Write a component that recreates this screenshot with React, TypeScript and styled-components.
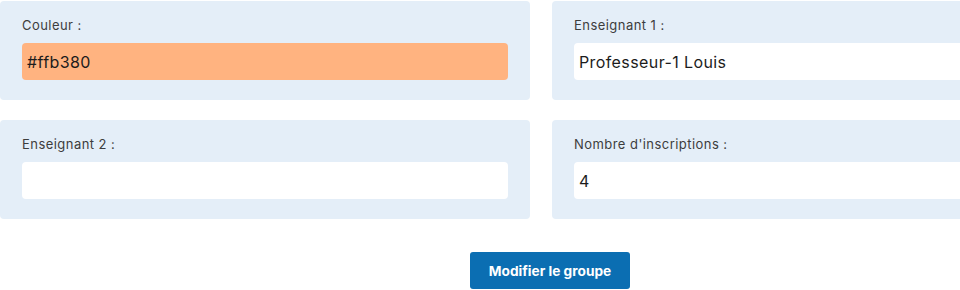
import React from 'react'
import styled, { createGlobalStyle } from 'styled-components'

const GlobalStyle = createGlobalStyle`
  html, body {
    margin: 0;
    padding: 0;
    background: #ffffff;
    font-family: Inter, "Noto Sans", "Liberation Sans", sans-serif;
    overflow: hidden;
  }
`

const Form = styled.form`
  width: 1100px;
  padding-top: 1px;
  display: flex;
  flex-direction: column;
`

const Grid = styled.div`
  display: grid;
  grid-template-columns: 530px 530px;
  column-gap: 22px;
  row-gap: 20px;
`

const Card = styled.div`
  background: #e4eef8;
  border-radius: 4px;
  padding: 16px 22px 20px;
  display: flex;
  flex-direction: column;
  gap: 9px;
`

const Label = styled.label`
  font-size: 13px;
  letter-spacing: 0.45px;
  line-height: 17px;
  color: #3d3d3d;
`

const Field = styled.div<{ $bg?: string }>`
  height: 37px;
  border-radius: 4px;
  background: ${p => p.$bg || '#ffffff'};
  display: flex;
  align-items: center;
  padding: 0 5px;
  font-size: 16px;
  font-weight: 400;
  letter-spacing: 0.4px;
  color: #1c1c1c;
`

const Actions = styled.div`
  display: flex;
  justify-content: center;
  padding-top: 33px;
`

const Button = styled.button`
  width: 160px;
  height: 37px;
  border: none;
  border-radius: 3px;
  background: #0b6eb2;
  color: #ffffff;
  font-family: inherit;
  font-size: 13.7px;
  font-weight: 700;
  cursor: pointer;
`

const fields = [
  { label: 'Couleur :', value: '#ffb380', bg: '#ffb380' },
  { label: 'Enseignant 1 :', value: 'Professeur-1 Louis' },
  { label: 'Enseignant 2 :', value: '' },
  { label: "Nombre d'inscriptions :", value: '4' },
]

export default function App() {
  return (
    <>
      <GlobalStyle />
      <Form onSubmit={e => e.preventDefault()}>
        <Grid>
          {fields.map(f => (
            <Card key={f.label}>
              <Label>{f.label}</Label>
              <Field $bg={f.bg}>{f.value}</Field>
            </Card>
          ))}
        </Grid>
        <Actions>
          <Button type="submit">Modifier le groupe</Button>
        </Actions>
      </Form>
    </>
  )
}
